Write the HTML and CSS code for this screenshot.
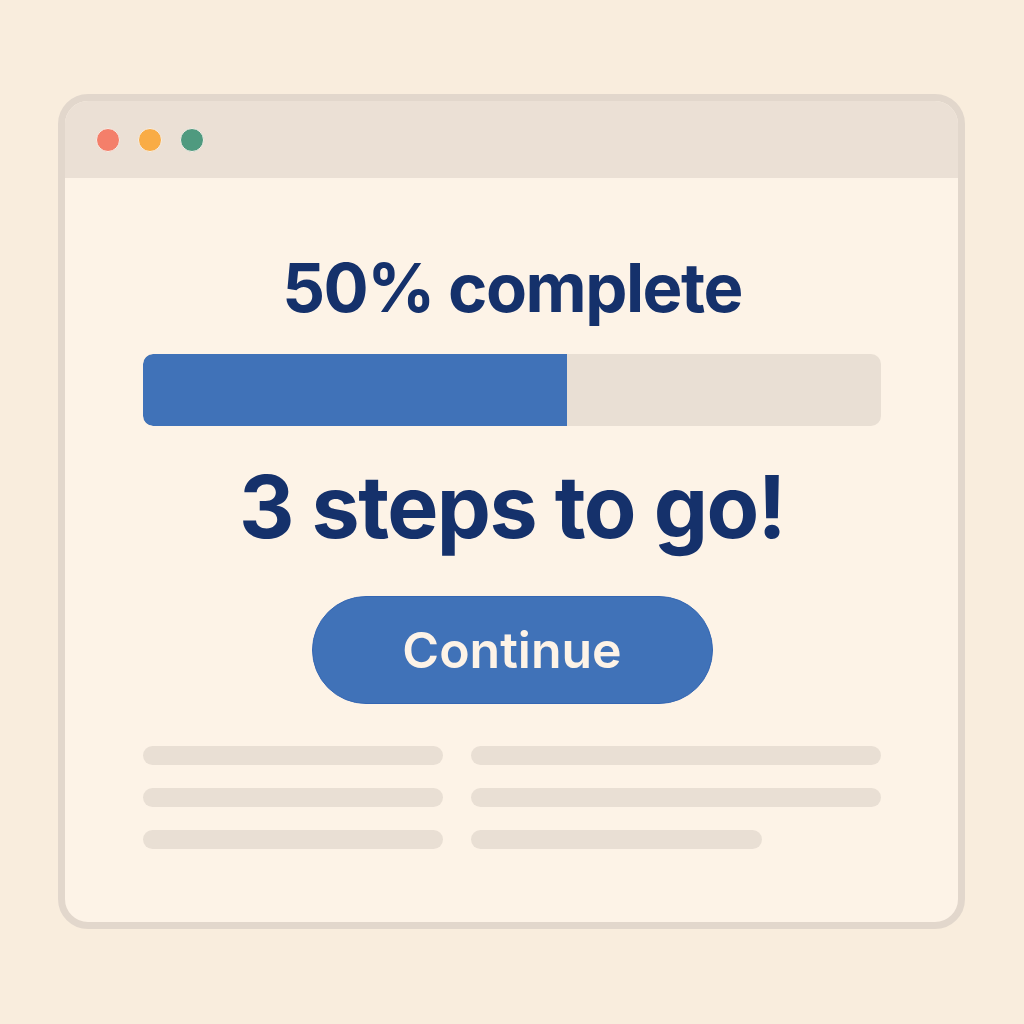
FILE: index.html
```html
<!DOCTYPE html>
<html lang="en">
<head>
    <meta charset="UTF-8">
    <meta name="viewport" content="width=device-width, initial-scale=1.0">
    <title>Progress</title>
    <link rel="stylesheet" href="styles.css">
</head>
<body>
    <div class="window">
        <div class="titlebar">
            <span class="dot red"></span>
            <span class="dot yellow"></span>
            <span class="dot green"></span>
        </div>
        <div class="content">
            <h1 class="headline">50% complete</h1>
            <div class="progress">
                <div class="progress-fill" style="width: 57.5%"></div>
            </div>
            <h2 class="steps">3 steps to go!</h2>
            <button type="button" class="continue">Continue</button>
            <div class="skeleton">
                <div class="col left">
                    <span class="line"></span>
                    <span class="line"></span>
                    <span class="line"></span>
                </div>
                <div class="col right">
                    <span class="line"></span>
                    <span class="line"></span>
                    <span class="line short"></span>
                </div>
            </div>
        </div>
    </div>
</body>
</html>
```

FILE: styles.css
```css
body {
    margin: 0;
    padding: 94px 0 0 58px;
    background-color: #f9eddd;
    font-family: 'Inter', sans-serif;
    height: 1024px;
    box-sizing: border-box;
}

.window {
    width: 907px;
    height: 835px;
    box-sizing: border-box;
    border: 7px solid #e2d7cc;
    border-radius: 30px;
    background-color: #fdf3e7;
    overflow: hidden;
    display: flex;
    flex-direction: column;
}

.titlebar {
    height: 77px;
    background-color: #ebe0d5;
    display: flex;
    align-items: center;
    gap: 18px;
    padding: 0 0 0 31px;
    flex-shrink: 0;
}

.dot {
    width: 22px;
    height: 22px;
    border-radius: 50%;
    border: 1px solid #f6efe8;
}

.dot.red {
    background-color: #f47f6a;
}

.dot.yellow {
    background-color: #f9ac45;
}

.dot.green {
    background-color: #4f9a7f;
}

.content {
    padding: 0 77px 0 78px;
    display: flex;
    flex-direction: column;
    align-items: center;
}

.headline {
    margin: 70px 0 0;
    font-size: 67px;
    font-weight: 700;
    letter-spacing: -1.5px;
    line-height: 80px;
    color: #15316b;
}

.progress {
    margin-top: 26px;
    width: 100%;
    height: 72px;
    background-color: #e9dfd4;
    border-radius: 10px;
    overflow: hidden;
}

.progress-fill {
    height: 100%;
    background-color: #4072b8;
    border-radius: 10px 0 0 10px;
}

.steps {
    margin: 31px 0 0;
    font-size: 86px;
    font-weight: 700;
    letter-spacing: -1.6px;
    line-height: 100px;
    color: #15316b;
}

.continue {
    margin-top: 39px;
    width: 401px;
    height: 108px;
    border-radius: 54px;
    border: 1px solid #3466b3;
    background-color: #4072b8;
    color: #fdf3e7;
    font-family: 'Inter', sans-serif;
    font-size: 50px;
    font-weight: 600;
    cursor: pointer;
}

.skeleton {
    margin-top: 42px;
    width: 100%;
    display: flex;
    gap: 28px;
}

.col {
    display: flex;
    flex-direction: column;
    gap: 23px;
}

.col.left {
    width: 300px;
}

.col.right {
    flex: 1;
}

.line {
    height: 19px;
    border-radius: 10px;
    background-color: #e9dfd4;
}

.line.short {
    width: 291px;
}
```
